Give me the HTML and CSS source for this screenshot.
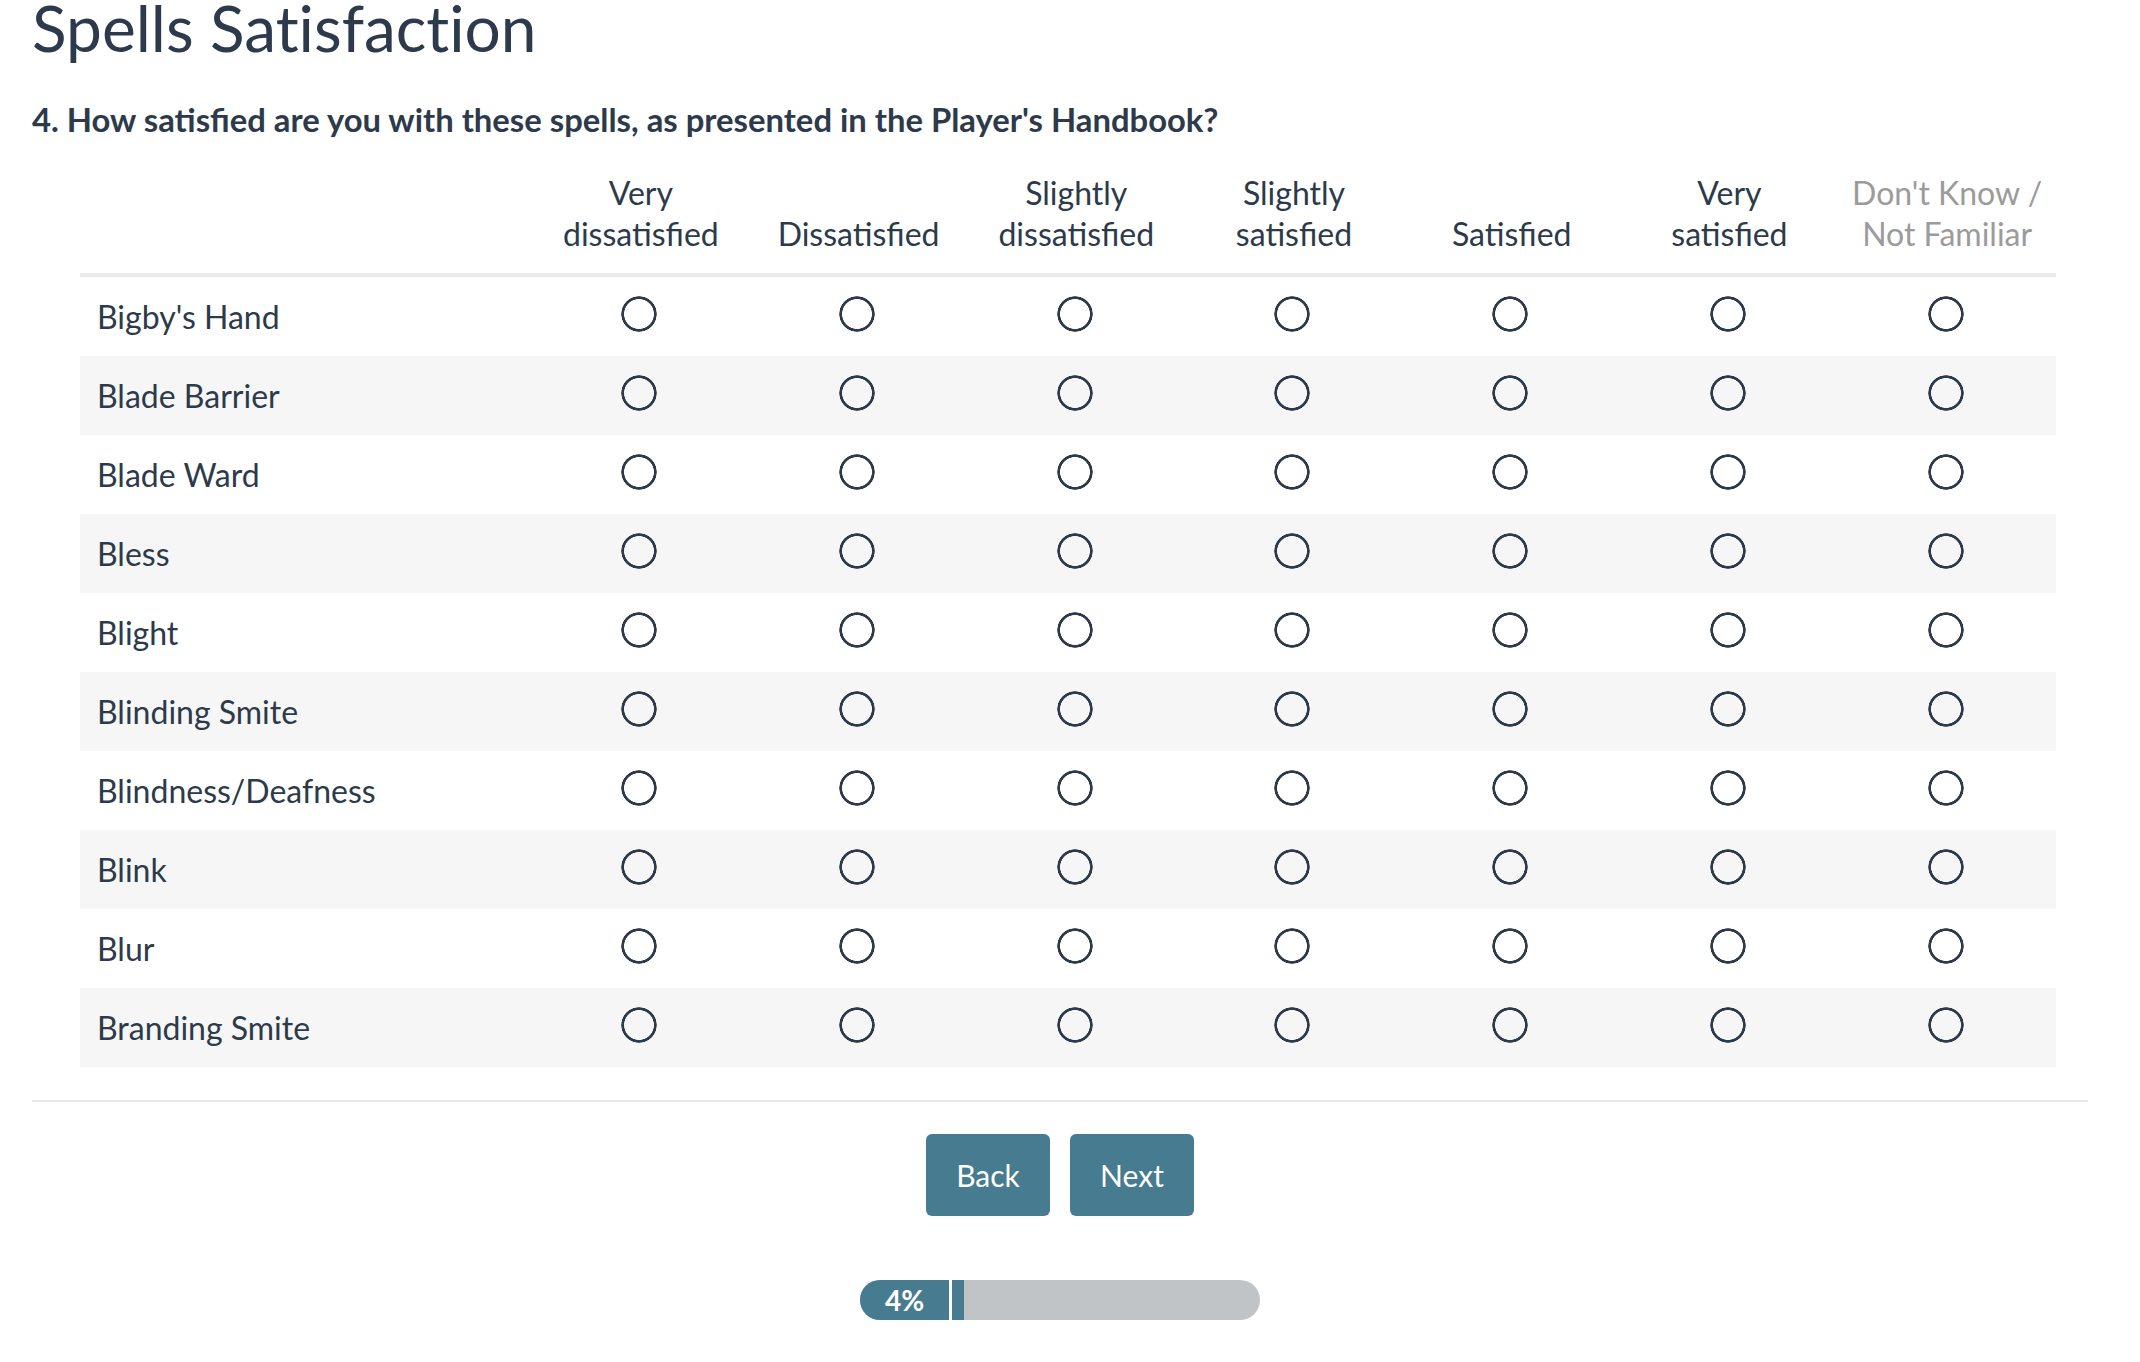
FILE: index.html
```html
<!DOCTYPE html>
<html lang="en">
<head>
<meta charset="utf-8">
<title>Spells Satisfaction</title>
<link rel="stylesheet" href="styles.css">
</head>
<body>
<div class="page">
  <h1 class="title">Spells Satisfaction</h1>
  <h2 class="question">4. How satisfied are you with these spells, as presented in the Player's Handbook?</h2>
  <div class="matrix">
    <div class="hrow">
      <div class="hcell blank"></div>
      <div class="hcell">Very<br>dissatisfied</div>
      <div class="hcell">Dissatisfied</div>
      <div class="hcell">Slightly<br>dissatisfied</div>
      <div class="hcell">Slightly<br>satisfied</div>
      <div class="hcell">Satisfied</div>
      <div class="hcell">Very<br>satisfied</div>
      <div class="hcell muted">Don't Know /<br>Not Familiar</div>
    </div>
    <div class="row"><div class="label">Bigby's Hand</div><div class="cell"><span class="radio"></span></div><div class="cell"><span class="radio"></span></div><div class="cell"><span class="radio"></span></div><div class="cell"><span class="radio"></span></div><div class="cell"><span class="radio"></span></div><div class="cell"><span class="radio"></span></div><div class="cell"><span class="radio"></span></div></div>
    <div class="row alt"><div class="label">Blade Barrier</div><div class="cell"><span class="radio"></span></div><div class="cell"><span class="radio"></span></div><div class="cell"><span class="radio"></span></div><div class="cell"><span class="radio"></span></div><div class="cell"><span class="radio"></span></div><div class="cell"><span class="radio"></span></div><div class="cell"><span class="radio"></span></div></div>
    <div class="row"><div class="label">Blade Ward</div><div class="cell"><span class="radio"></span></div><div class="cell"><span class="radio"></span></div><div class="cell"><span class="radio"></span></div><div class="cell"><span class="radio"></span></div><div class="cell"><span class="radio"></span></div><div class="cell"><span class="radio"></span></div><div class="cell"><span class="radio"></span></div></div>
    <div class="row alt"><div class="label">Bless</div><div class="cell"><span class="radio"></span></div><div class="cell"><span class="radio"></span></div><div class="cell"><span class="radio"></span></div><div class="cell"><span class="radio"></span></div><div class="cell"><span class="radio"></span></div><div class="cell"><span class="radio"></span></div><div class="cell"><span class="radio"></span></div></div>
    <div class="row"><div class="label">Blight</div><div class="cell"><span class="radio"></span></div><div class="cell"><span class="radio"></span></div><div class="cell"><span class="radio"></span></div><div class="cell"><span class="radio"></span></div><div class="cell"><span class="radio"></span></div><div class="cell"><span class="radio"></span></div><div class="cell"><span class="radio"></span></div></div>
    <div class="row alt"><div class="label">Blinding Smite</div><div class="cell"><span class="radio"></span></div><div class="cell"><span class="radio"></span></div><div class="cell"><span class="radio"></span></div><div class="cell"><span class="radio"></span></div><div class="cell"><span class="radio"></span></div><div class="cell"><span class="radio"></span></div><div class="cell"><span class="radio"></span></div></div>
    <div class="row"><div class="label">Blindness/Deafness</div><div class="cell"><span class="radio"></span></div><div class="cell"><span class="radio"></span></div><div class="cell"><span class="radio"></span></div><div class="cell"><span class="radio"></span></div><div class="cell"><span class="radio"></span></div><div class="cell"><span class="radio"></span></div><div class="cell"><span class="radio"></span></div></div>
    <div class="row alt"><div class="label">Blink</div><div class="cell"><span class="radio"></span></div><div class="cell"><span class="radio"></span></div><div class="cell"><span class="radio"></span></div><div class="cell"><span class="radio"></span></div><div class="cell"><span class="radio"></span></div><div class="cell"><span class="radio"></span></div><div class="cell"><span class="radio"></span></div></div>
    <div class="row"><div class="label">Blur</div><div class="cell"><span class="radio"></span></div><div class="cell"><span class="radio"></span></div><div class="cell"><span class="radio"></span></div><div class="cell"><span class="radio"></span></div><div class="cell"><span class="radio"></span></div><div class="cell"><span class="radio"></span></div><div class="cell"><span class="radio"></span></div></div>
    <div class="row alt"><div class="label">Branding Smite</div><div class="cell"><span class="radio"></span></div><div class="cell"><span class="radio"></span></div><div class="cell"><span class="radio"></span></div><div class="cell"><span class="radio"></span></div><div class="cell"><span class="radio"></span></div><div class="cell"><span class="radio"></span></div><div class="cell"><span class="radio"></span></div></div>
  </div>
  <div class="footer">
    <div class="buttons">
      <button class="btn">Back</button>
      <button class="btn">Next</button>
    </div>
    <div class="progress">
      <div class="plabel">4%</div>
      <div class="pfill"></div>
    </div>
  </div>
</div>
</body>
</html>
```
FILE: styles.css
```css
html, body {
  margin: 0;
  padding: 0;
  background: #ffffff;
}
body {
  font-family: Lato, "Open Sans", "Liberation Sans", sans-serif;
  color: #2c3a4b;
}
.page {
  width: 2056px;
  margin-left: 32px;
}
.title {
  margin: 0;
  font-size: 64px;
  line-height: 56px;
  font-weight: 400;
  font-variant-ligatures: no-common-ligatures;
  color: #2c3a4b;
}
.question {
  margin: 44px 0 0 0;
  font-size: 32.8px;
  line-height: 40px;
  font-weight: 700;
  color: #2c3a4b;
}
.matrix {
  width: 1976px;
  margin: 32px 0 0 48px;
}
.hrow, .row {
  display: grid;
  grid-template-columns: 452px repeat(7, 1fr);
}
.hrow {
  align-items: end;
  padding-bottom: 19px;
  border-bottom: 4px solid #e9eaec;
}
.hcell {
  font-size: 32px;
  line-height: 41px;
  text-align: center;
  color: #2c3a4b;
}
.hcell.muted {
  color: #9b9b9b;
}
.row {
  height: 79px;
  align-items: center;
}
.row.alt {
  background: #f6f6f6;
}
.label {
  padding-left: 17px;
  font-size: 32px;
  line-height: 41px;
  color: #2c3a4b;
}
.cell {
  display: flex;
  justify-content: center;
}
.radio {
  display: block;
  width: 36px;
  height: 36px;
  margin-top: -5px;
  margin-left: -3px;
  border-radius: 50%;
  background: radial-gradient(circle closest-side, transparent 14.6px, #2c3a4b 15.2px, #2c3a4b 17.4px, transparent 18px);
}
.footer {
  margin-top: 33px;
  border-top: 2px solid #e8e8e8;
  display: flex;
  flex-direction: column;
  align-items: center;
}
.buttons {
  margin-top: 32px;
  display: flex;
  gap: 20px;
}
.btn {
  width: 124px;
  height: 82px;
  border: 0;
  border-radius: 6px;
  background: #477b8f;
  color: #ffffff;
  font-family: Lato, "Open Sans", "Liberation Sans", sans-serif;
  font-size: 30px;
  padding: 0;
}
.progress {
  margin-top: 64px;
  width: 400px;
  height: 40px;
  border-radius: 20px;
  background: #c0c4c7;
  display: flex;
  overflow: hidden;
}
.plabel {
  width: 89px;
  background: #477b8f;
  color: #ffffff;
  font-weight: 700;
  font-size: 28px;
  line-height: 40px;
  text-align: center;
  border-right: 3px solid #ffffff;
}
.pfill {
  width: 12px;
  background: #477b8f;
}
```
